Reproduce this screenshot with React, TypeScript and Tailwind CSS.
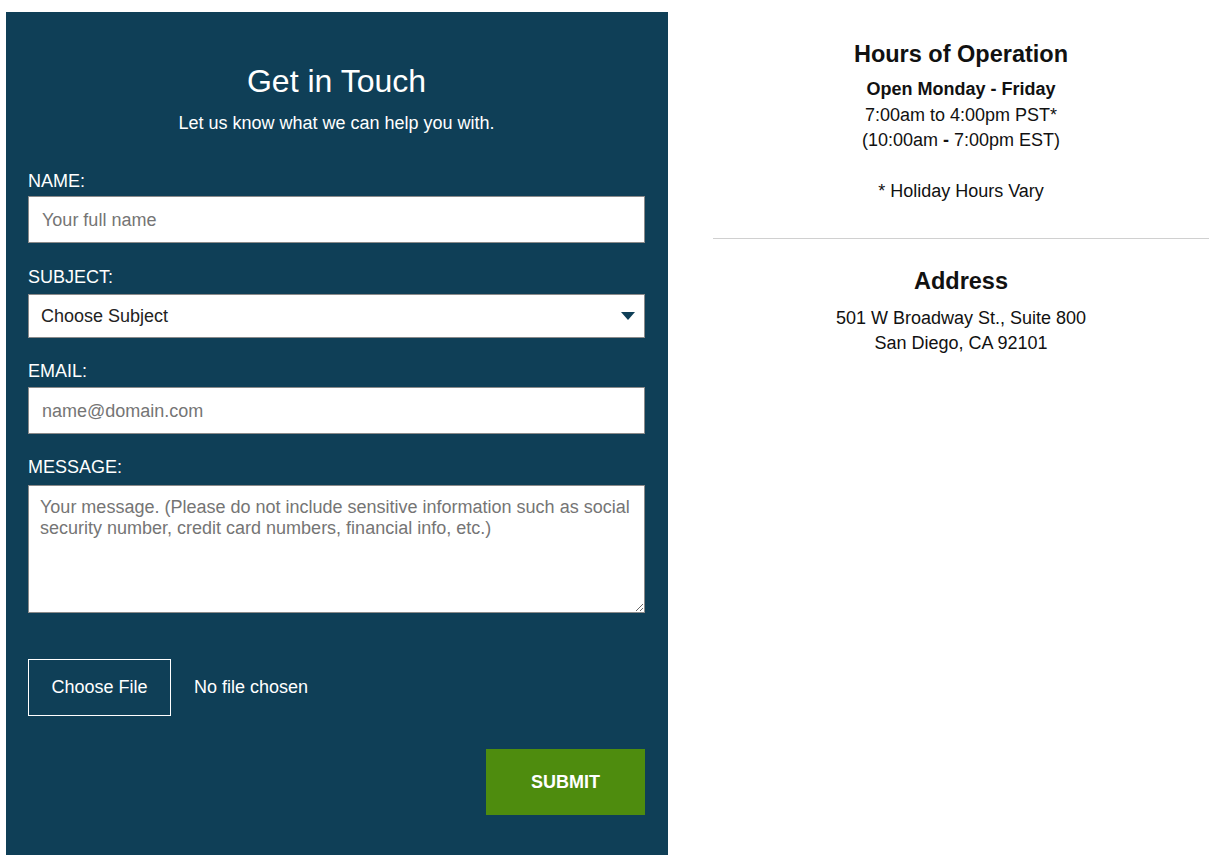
import { ChangeEvent, useState } from 'react'

const font = { fontFamily: '"Liberation Sans", Arial, sans-serif' }

const fieldClass =
  'block w-full bg-white border border-[#8a8a8a] text-[18px] text-[#222] outline-none placeholder:text-[#757575]'

function Label({ children }: { children: string }) {
  return <label className="block text-[18px] leading-[24px] text-white">{children}</label>
}

export default function App() {
  const [fileName, setFileName] = useState('')

  return (
    <div className="min-h-screen bg-white flex items-start pt-[12px] pl-[6px]" style={font}>
      {/* Contact form */}
      <form
        className="w-[662px] shrink-0 bg-[#0f3f57] pt-[51px] pb-[40px] pl-[22px] pr-[23px]"
        onSubmit={(e) => e.preventDefault()}
      >
        <h1 className="text-center text-[32px] leading-[36px] text-white">Get in Touch</h1>
        <p className="mt-[12px] text-center text-[18px] leading-[24px] text-white">
          Let us know what we can help you with.
        </p>

        <div className="mt-[34px]">
          <Label>NAME:</Label>
          <input className={`${fieldClass} mt-[3px] h-[47px] px-[13px] pt-[2px]`} placeholder="Your full name" />
        </div>

        <div className="mt-[22px]">
          <Label>SUBJECT:</Label>
          <div className="relative mt-[5px]">
            <select className={`${fieldClass} h-[44px] appearance-none pl-[12px] pr-[40px]`} defaultValue="">
              <option value="">Choose Subject</option>
              <option>General Question</option>
              <option>Billing</option>
              <option>Other</option>
            </select>
            <svg
              className="pointer-events-none absolute right-[10px] top-[18px]"
              width="14"
              height="8"
              viewBox="0 0 14 8"
            >
              <path d="M0 0h14L7 8z" fill="#0f3f57" />
            </svg>
          </div>
        </div>

        <div className="mt-[21px]">
          <Label>EMAIL:</Label>
          <input className={`${fieldClass} mt-[4px] h-[47px] px-[13px] pt-[2px]`} placeholder="name@domain.com" />
        </div>

        <div className="mt-[21px]">
          <Label>MESSAGE:</Label>
          <textarea
            className={`${fieldClass} mt-[6px] h-[128px] px-[11px] pt-[11px] leading-[21px]`}
            placeholder="Your message. (Please do not include sensitive information such as social security number, credit card numbers, financial info, etc.)"
          />
        </div>

        <div className="mt-[46px] flex items-center gap-[23px]">
          <label className="flex h-[57px] w-[143px] cursor-pointer items-center justify-center border border-white text-[18px] text-white">
            Choose File
            <input
              type="file"
              className="hidden"
              onChange={(e: ChangeEvent<HTMLInputElement>) => setFileName(e.target.files?.[0]?.name ?? '')}
            />
          </label>
          <span className="text-[18px] text-white">{fileName || 'No file chosen'}</span>
        </div>

        <div className="mt-[33px] flex justify-end">
          <button
            type="submit"
            className="h-[66px] w-[159px] bg-[#4e8c0e] text-[18px] font-bold text-white"
          >
            SUBMIT
          </button>
        </div>
      </form>

      {/* Info column */}
      <div className="ml-[45px] w-[496px] pt-[29px] text-center text-[18px] leading-[25px] text-[#111]">
        <h2 className="text-[23.5px] leading-[26px] font-bold">Hours of Operation</h2>
        <p className="mt-[10px] leading-[25.5px]">
          <span className="font-bold">Open Monday - Friday</span>
          <br />
          7:00am to 4:00pm PST*
          <br />
          (10:00am <span className="font-bold">-</span> 7:00pm EST)
          <br />
          <br />* Holiday Hours Vary
        </p>
        <hr className="mt-[33px] border-t border-[#d0d0d0]" />
        <h2 className="mt-[29px] text-[23.5px] leading-[26px] font-bold">Address</h2>
        <p className="mt-[12px]">
          501 W Broadway St., Suite 800
          <br />
          San Diego, CA 92101
        </p>
      </div>
    </div>
  )
}
